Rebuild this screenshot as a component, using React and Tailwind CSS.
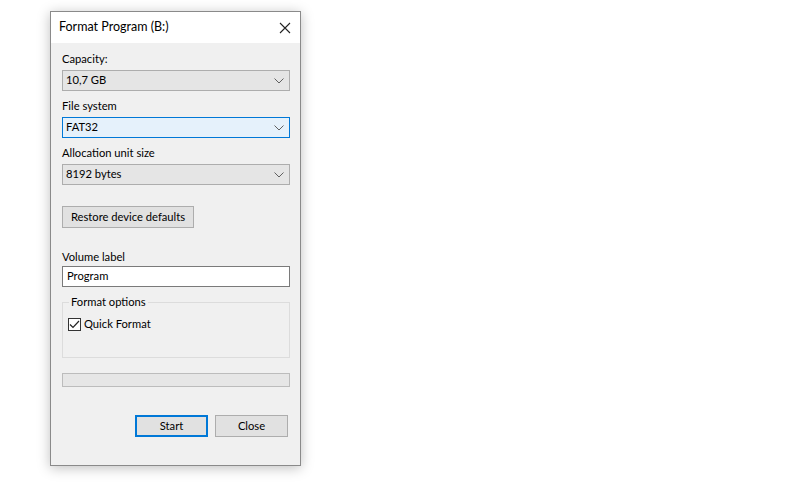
import React from 'react';

const Chevron = () => (
  <svg width="10" height="6" viewBox="0 0 10 6" className="text-[#606060]">
    <path d="M0.5 0.5 L5 5 L9.5 0.5" fill="none" stroke="currentColor" strokeWidth="1" />
  </svg>
);

const Select = ({ value, focused }) => (
  <div
    className={`h-[21px] flex items-center justify-between pl-[3px] pr-[5px] border ${
      focused ? 'bg-[#e5f1fb] border-[#0078d7]' : 'bg-[#e5e5e5] border-[#adadad]'
    }`}
  >
    <span>{value}</span>
    <Chevron />
  </div>
);

const Label = ({ children, className = '' }) => (
  <div className={`h-[14px] leading-[14px] ${className}`}>{children}</div>
);

const App = () => {
  return (
    <div className="w-[800px] h-[500px] bg-white pt-[11px] pl-[50px]" style={{ fontFamily: 'Lato, "Noto Sans", sans-serif' }}>
      <div className="w-[251px] h-[455px] flex flex-col bg-[#f0f0f0] border border-[#8a8a8a] shadow-[0_2px_12px_rgba(0,0,0,0.25)] text-[11.2px] text-black">
        {/* Title bar */}
        <div className="h-[31px] bg-white flex items-center justify-between pl-[8px] pr-[9px] shrink-0">
          <span className="text-[12.5px]">Format Program (B:)</span>
          <svg width="12" height="12" viewBox="0 0 12 12">
            <path d="M1 1 L11 11 M11 1 L1 11" stroke="#222" strokeWidth="1.1" />
          </svg>
        </div>

        {/* Body */}
        <div className="flex flex-col pl-[11px] pr-[10px]">
          <Label className="mt-[9px]">Capacity:</Label>
          <div className="mt-[4px]"><Select value="10,7 GB" /></div>

          <Label className="mt-[8px]">File system</Label>
          <div className="mt-[4px]"><Select value="FAT32" focused /></div>

          <Label className="mt-[8px]">Allocation unit size</Label>
          <div className="mt-[4px]"><Select value="8192 bytes" /></div>

          <button className="mt-[21px] self-start w-[132px] h-[22px] bg-[#e1e1e1] border border-[#adadad] leading-none whitespace-nowrap">
            Restore device defaults
          </button>

          <Label className="mt-[22px]">Volume label</Label>
          <div className="mt-[2px] h-[21px] bg-white border border-[#7a7a7a] flex items-center pl-[4px]">
            Program
          </div>

          <fieldset className="mt-[8px] h-[63px] border border-[#dcdcdc] pl-[5px] pt-[6px]">
            <legend className="px-[2px] ml-[1px] leading-[14px]">Format options</legend>
            <label className="flex items-center gap-[3px] mt-[1px]">
              <span className="w-[13px] h-[13px] border border-[#333] bg-white flex items-center justify-center">
                <svg width="11" height="9" viewBox="0 0 11 9">
                  <path d="M1 4.5 L4 7.5 L10 1" fill="none" stroke="#222" strokeWidth="1.2" />
                </svg>
              </span>
              <span>Quick Format</span>
            </label>
          </fieldset>

          <div className="mt-[15px] h-[14px] bg-[#e6e6e6] border border-[#bcbcbc]" />

          <div className="mt-[28px] flex justify-end gap-[7px] pr-[2px]">
            <button className="w-[73px] h-[22px] bg-[#e1e1e1] border-2 border-[#0078d7] leading-none">
              Start
            </button>
            <button className="w-[73px] h-[22px] bg-[#e1e1e1] border border-[#adadad] leading-none">
              Close
            </button>
          </div>
        </div>
      </div>
    </div>
  );
};

export default App;
